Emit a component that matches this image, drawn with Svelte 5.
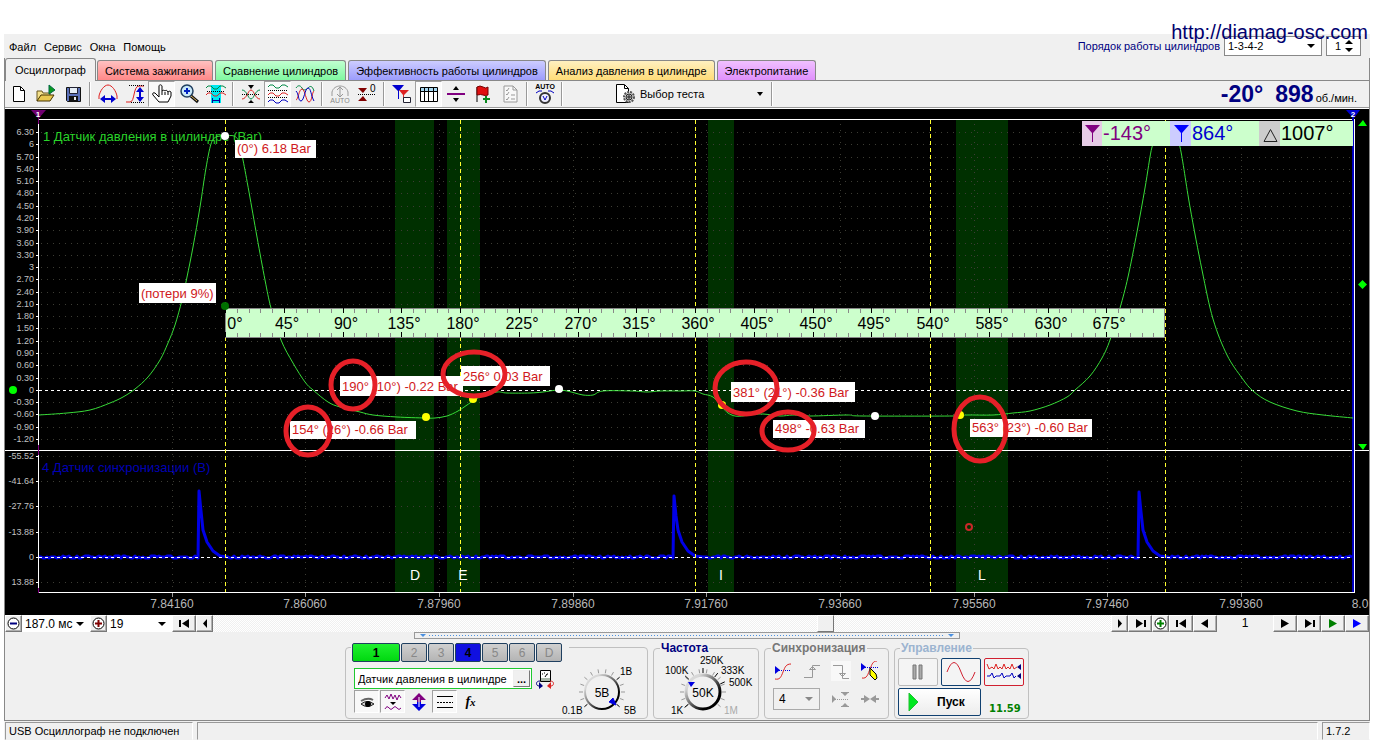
<script>
  const tabs = [
    { label: 'Осциллограф', tone: 'active' },
    { label: 'Система зажигания', tone: 'red' },
    { label: 'Сравнение цилиндров', tone: 'green' },
    { label: 'Эффективность работы цилиндров', tone: 'blue' },
    { label: 'Анализ давления в цилиндре', tone: 'yellow' },
    { label: 'Электропитание', tone: 'violet' }
  ];

  const toolGroups = [
    ['new', 'open', 'save'],
    ['spanX', 'spanY', 'hand', 'zoom', 'range'],
    ['merge', 'stack', 'overlay'],
    ['autoGray', 'zero'],
    ['cursors', 'grid', 'split', 'flag', 'list'],
    ['autoDial']
  ];
  let pressed = $state({ hand: true, stack: true, grid: true });

  const hump = (y, c) => `<path d="M1 ${y}l2-2h3l3 3h3l3-3h3l3 2" fill="none" stroke="${c}"/>`;
  const icons = {
    new: '<path d="M5.5 3.5h7l4 4v11h-11z" fill="#fff" stroke="#000"/><path d="M12.5 4v3.5h4" fill="none" stroke="#000"/>',
    open: '<path d="M2 18V8h5l1 2h7v3" fill="#f4e08a" stroke="#665520"/><path d="M2 18l4-6h13l-4 6z" fill="#e8c850" stroke="#443300"/><path d="M14 2l6 5-6 4z" fill="#0a9a20" stroke="#064"/>',
    save: '<path d="M4.5 4.5h14v14h-13l-1-1z" fill="#5a70b8" stroke="#111"/><path d="M7.5 4.5h8v6h-8z" fill="#e4ecf4" stroke="#223"/><path d="M7 13h9v5H7z" fill="#111"/><path d="M12 14h2v3h-2z" fill="#eee"/>',
    spanX: '<path d="M2 16V13C3 8 7 2 11 2s8 6 9 11v3" fill="none" stroke="#e02020"/><path d="M6 16h10" stroke="#0000d0" stroke-width="2"/><path d="M3 16l5-4v8zM19 16l-5-4v8z" fill="#0000d0"/>',
    spanY: '<path d="M2 19h4c5 0 3-16 9-16h5" fill="none" stroke="#e02020"/><path d="M5 2.5h15M7 19.5h13" stroke="#000" stroke-dasharray="1 1"/><path d="M16 7v9" stroke="#0000d0" stroke-width="2"/><path d="M16 4l-4 5h8zM16 19l-4-5h8z" fill="#0000d0"/>',
    hand: '<path d="M8 14L4 10c-2-1-3 1-2 2l6 7h9l3-6V9c-1-1-2-1-3 0-1-2-2-2-3-1-1-1-2-1-3 0V3c-1-2-3-1-3 0z" fill="#fff" stroke="#000"/><path d="M11 8v4M14 9v3M17 9v3" stroke="#000"/>',
    zoom: '<circle cx="9" cy="8" r="6" fill="#c8e8f8" stroke="#224060" stroke-width="1.5"/><path d="M13 13l7 6" stroke="#111" stroke-width="3"/><path d="M13 13l6 5" stroke="#e0b860"/><path d="M6 8h6M9 5v6" stroke="#0020c0" stroke-width="2"/>',
    range: '<path d="M6 2h10v18H6z" fill="#00e8f0"/>' + hump(5, '#084') + hump(12, '#d22') + '<path d="M2 8.5h18" stroke="#000" stroke-dasharray="1 1"/><path d="M7 17.5h8M7.5 15v5M14.5 15v5" stroke="#0000a0"/>',
    merge: '<path d="M2 7c5 0 6 9 9 9s4-9 9-9" fill="none" stroke="#084"/><path d="M2 16c5 0 6-9 9-9s4 9 9 9" fill="none" stroke="#d22"/><path d="M2 11.5h18" stroke="#000" stroke-dasharray="1 1"/><path d="M8 2h6l-3 4zM8 20h6l-3-3z" fill="#000"/>',
    stack: hump(4, '#084') + '<path d="M1 7.5h20M1 14.5h20" stroke="#000" stroke-dasharray="1 1"/>' + hump(12, '#d22') + hump(19, '#0000c0'),
    overlay: '<path d="M2 5c2-3 4-3 6 0s4 2 6 0 4-3 6 3" fill="none" stroke="#084"/><path d="M2 17C4 17 5 6 8 6s4 13 7 13 3-10 5-11" fill="none" stroke="#d22"/><path d="M2 8c3 3 2 10 5 10s4-13 7-13 3 8 6 13" fill="none" stroke="#0000c0"/>',
    autoGray: '<path d="M3 13V9C5 1 17 1 19 9v4" fill="none" stroke="#999"/><path d="M11 5v8M8 7l3-3 3 3M8 11l3 3 3-3" fill="none" stroke="#999"/><text x="11" y="20" font-size="7" text-anchor="middle" fill="#888">AUTO</text>',
    zero: '<path d="M2 5h9l-4 5zM2 18h9l-4-5z" fill="#800000"/><path d="M2 11.5h18" stroke="#000" stroke-dasharray="1 1"/><text x="14" y="9" font-size="10" fill="#000">0</text>',
    cursors: '<path d="M1 2h12L8 8v8H7V8z" fill="#0000d0"/><path d="M8 7h10l-5 5v7h-1v-7z" fill="#d22"/><path d="M12.5 14.5h7v5h-7z" fill="#fff" stroke="#223"/>',
    grid: '<path d="M2.5 4.5h17v14h-17z" fill="#fff" stroke="#000"/><path d="M3 5h16v3H3z" fill="#a8d8f0"/><path d="M2 8.5h18M6.5 5v13M10.5 5v13M15.5 5v13" stroke="#000"/>',
    split: '<path d="M2 11h18" stroke="#800080" stroke-width="2"/><path d="M8 7h6l-3-4zM8 15h6l-3 4z" fill="#000"/>',
    flag: '<path d="M5 4v15" stroke="#000"/><path d="M5 4q3-2 6 0t5 0v8q-3 1-5 0t-6 0z" fill="#e01010" stroke="#700"/><path d="M11 16h7M14 13v7" stroke="#0a8a20" stroke-width="2"/>',
    list: '<path d="M5 3h9l4 4v12H5z" fill="#f8f8f8" stroke="#999"/><path d="M14 3v4h4M7 7l1 1 2-3M7 11l1 1 2-3M7 16l1 1 2-3M12 12h4M12 16h4" fill="none" stroke="#999"/>',
    autoDial: '<text x="11" y="6" font-size="7" font-weight="bold" text-anchor="middle" fill="#000">AUTO</text><circle cx="11" cy="15" r="5" fill="#eef" stroke="#333" stroke-width="2"/><path d="M9 13l2 4 2-4M2 10q3-3 6-2M20 10q-3-3-6-2" fill="none" stroke="#0000c0"/>',
    test: '<path d="M2.5 1.5h8l4 4v14h-12z" fill="#fff" stroke="#000"/><path d="M10.5 2v3.5h4" fill="none" stroke="#000"/><circle cx="15" cy="14" r="5" fill="#ddd" stroke="#555" stroke-width="2" stroke-dasharray="2 1"/><circle cx="15" cy="14" r="3" fill="#bbb" stroke="#222"/><path d="M15 12v4M13 14h4" stroke="#222"/>'
  };

  const seconds = [
    { x: 172, t: '7.84160' }, { x: 305, t: '7.86060' }, { x: 439, t: '7.87960' },
    { x: 573, t: '7.89860' }, { x: 706, t: '7.91760' }, { x: 840, t: '7.93660' },
    { x: 974, t: '7.95560' }, { x: 1107, t: '7.97460' }, { x: 1241, t: '7.99360' },
    { x: 1360, t: '8.0' }
  ];
  const barTicks = Array.from({ length: 26 }, (_, i) => {
    const v = (63 - i * 3) / 10;
    return { y: Math.round(132 + i * 12.28), t: Number.isInteger(v) ? String(v) : v.toFixed(2) };
  });
  const voltTicks = ['-55.52', '-41.64', '-27.76', '-13.88', '0', '13.88'].map((t, i) => ({
    y: Math.round(456 + i * 25.2),
    t
  }));
  const bands = [
    { x: 395, w: 39, t: 'D', tx: 415 },
    { x: 447, w: 33, t: 'E', tx: 463 },
    { x: 708, w: 26, t: 'I', tx: 721 },
    { x: 956, w: 52, t: 'L', tx: 982 }
  ];
  const strokes = [225, 460, 695, 930, 1165];
  const rulerTicks = Array.from({ length: 80 }, (_, i) => ({ x: Math.round(225 + i * 11.75), major: i % 5 === 0 }));
  const rulerLabels = Array.from({ length: 16 }, (_, i) => ({
    x: i ? Math.round(228 + i * 58.75) : 235,
    t: i * 45 + '°'
  }));

  const pressure = [
    [39, 415], [67, 413], [90, 410], [110, 403], [123, 397], [135, 389], [148, 377], [160, 360],
    [168, 343], [175, 325], [182, 300], [187, 277], [193, 247], [200, 207], [206, 168], [211, 144],
    [216, 137], [225, 136], [234, 136], [239, 142], [243, 160], [249, 192], [257, 237], [265, 280],
    [271, 308], [281, 340], [293, 363], [305, 382], [313, 390], [328, 402], [340, 407], [360, 412],
    [373, 415], [397, 417], [425, 418], [435, 418], [447, 416], [458, 411], [467, 405], [473, 401],
    [482, 396], [497, 392], [507, 393], [530, 393], [543, 392], [558, 390], [567, 391], [575, 393],
    [583, 395], [593, 395], [603, 391], [632, 391], [647, 392], [660, 391], [680, 391], [695, 391],
    [703, 394], [713, 397], [722, 407], [728, 413], [735, 416], [743, 416], [748, 415], [763, 414],
    [780, 416], [793, 415], [810, 416], [847, 415], [863, 416], [953, 416], [967, 415], [993, 415],
    [1013, 413], [1030, 411], [1050, 405], [1067, 397], [1075, 390], [1090, 376], [1102, 358],
    [1110, 340], [1120, 308], [1128, 277], [1137, 232], [1145, 188], [1152, 147], [1158, 138],
    [1165, 136], [1174, 138], [1180, 147], [1190, 207], [1202, 270], [1213, 319], [1227, 355],
    [1242, 378], [1253, 391], [1270, 402], [1297, 411], [1323, 415], [1353, 418]
  ];

  // Catmull-Rom through the samples
  function smooth(pts) {
    let d = `M${pts[0]}`;
    for (let i = 0; i < pts.length - 1; i++) {
      const a = pts[i - 1] ?? pts[i];
      const b = pts[i];
      const c = pts[i + 1];
      const e = pts[i + 2] ?? c;
      d += `C${b[0] + (c[0] - a[0]) / 6} ${b[1] + (c[1] - a[1]) / 6} ${c[0] - (e[0] - b[0]) / 6} ${c[1] - (e[1] - b[1]) / 6} ${c}`;
    }
    return d;
  }

  function syncPath() {
    let d = 'M39 557';
    let x = 41;
    for (const [px, top] of [[198, 491], [673, 496], [1138, 492]]) {
      for (; x < px - 1; x += 2) d += `L${x} ${557 + Math.round(Math.sin(x * x) * 0.9)}`;
      d += `L${px} 558L${px + 1} ${top}L${px + 3} ${top + 20}L${px + 5} 530L${px + 9} 542L${px + 15} 551L${px + 22} 556L${px + 30} 557`;
      x = px + 32;
    }
    for (; x < 1353; x += 2) d += `L${x} ${557 + Math.round(Math.sin(x * x) * 0.9)}`;
    return d;
  }

  const dots = [
    [225, 136, '#fff'], [559, 389, '#fff'], [875, 416, '#fff'], [426, 417, '#ff0'],
    [473, 399, '#ff0'], [722, 405, '#ff0'], [960, 415, '#ff0'], [225, 306, '#007000'], [13, 390, '#0f0']
  ];
  const notes = [
    { x: 235, y: 140, w: 81, h: 18, t: '(0°) 6.18 Bar' },
    { x: 139, y: 283, w: 77, h: 20, t: '(потери 9%)' },
    { x: 340, y: 376, w: 123, h: 20, t: '190° (10°) -0.22 Bar' },
    { x: 290, y: 421, w: 126, h: 18, t: '154° (26°) -0.66 Bar' },
    { x: 461, y: 366, w: 89, h: 20, t: '256° 0.03 Bar' },
    { x: 731, y: 382, w: 124, h: 20, t: '381° (21°) -0.36 Bar' },
    { x: 773, y: 420, w: 92, h: 18, t: '498° -0.63 Bar' },
    { x: 970, y: 419, w: 122, h: 18, t: '563° (23°) -0.60 Bar' }
  ];
  const circles = [
    [353, 385, 22, 24], [308, 431, 22, 24], [474, 374, 31, 22],
    [746, 388, 31, 26], [788, 431, 26, 19], [980, 429, 26, 32]
  ];

  let channel = $state('1');
  let channelName = $state('Датчик давления в цилиндре');
  let scroll = $state(686);

  function ray(cx, cy, deg, r1, r2) {
    const a = (deg * Math.PI) / 180;
    return `M${cx + Math.sin(a) * r1} ${cy - Math.cos(a) * r1}L${cx + Math.sin(a) * r2} ${cy - Math.cos(a) * r2}`;
  }
  const dialSteps = Array.from({ length: 14 }, (_, i) => -130 + i * 20);
</script>

{#snippet nav(label, d, w, color = '#000')}
  <button class="nav" class:narrow={w === 17} aria-label={label}>
    <svg width="12" height="11" viewBox="0 0 12 11"><path {d} fill={color} /></svg>
  </button>
{/snippet}

{#snippet round(label, color, plus)}
  <button class="nav narrow" aria-label={label}>
    <svg width="13" height="13" viewBox="0 0 13 13">
      <circle cx="6.5" cy="6.5" r="5.5" fill="#fff" stroke="#000" />
      <path d={plus ? 'M3 6.5h7M6.5 3v7' : 'M3 6.5h7'} stroke={color} stroke-width="2" />
    </svg>
  </button>
{/snippet}

<div class="window">
  <div class="menubar">
    <nav>
      <a href="#file">Файл</a>
      <a href="#service">Сервис</a>
      <a href="#windows">Окна</a>
      <a href="#help">Помощь</a>
    </nav>
    <div class="order">
      <label for="order">Порядок работы цилиндров</label>
      <span class="drop framed">
        <select id="order"><option>1-3-4-2</option></select>
      </span>
      <span class="spin">
        <input aria-label="Цилиндр" value="1" />
        <span class="arrows">
          <button class="up" aria-label="Больше"></button>
          <button class="down" aria-label="Меньше"></button>
        </span>
      </span>
    </div>
    <a class="site" href="http://diamag-osc.com">http://diamag-osc.com</a>
  </div>

  <div class="workspace">
    <div class="tabs" role="tablist">
      {#each tabs as tab}
        <button role="tab" aria-selected={tab.tone === 'active'} class="tab {tab.tone}">{tab.label}</button>
      {/each}
    </div>

    <div class="toolbar">
      {#each toolGroups as group}
        {#each group as name}
          <button class="tool" class:pressed={pressed[name]} aria-label={name} onclick={() => (pressed[name] = !pressed[name])}>
            <svg width="22" height="22" viewBox="0 0 22 22">{@html icons[name]}</svg>
          </button>
        {/each}
        <span class="sep"></span>
      {/each}
      <button class="test">
        <svg width="22" height="22" viewBox="0 0 22 22">{@html icons.test}</svg>
        <span>Выбор теста</span>
        <i class="caret"></i>
      </button>
      <span class="sep"></span>
      <div class="speed">
        <b>-20°</b>
        <b>898</b>
        <span>об./мин.</span>
      </div>
    </div>

    <svg class="chart" viewBox="5 109 1364 506" role="img" aria-label="Осциллограмма">
      <rect x="5" y="109" width="1364" height="506" fill="#000" />
      {#each bands as b}
        <rect x={b.x} y="120" width={b.w} height="472" fill="#003000" />
      {/each}

      <g class="crisp gridlines">
        {#each [...barTicks, ...voltTicks] as t}
          <path d="M41 {t.y}.5H1353" />
        {/each}
        {#each seconds as s}
          {#if s.x < 1353}<path d="M{s.x}.5 124V592" />{/if}
        {/each}
      </g>
      <g class="crisp" stroke="#fff" fill="none">
        <path d="M39 119.5H1354M38.5 119V593M38 592.5H1355M1354.5 119V593M5 450.5H1369" />
        {#each [...barTicks, ...voltTicks] as t}
          <path d="M36 {t.y}.5h3" />
        {/each}
        {#each seconds as s}
          {#if s.x < 1353}<path d="M{s.x}.5 593v4" stroke="#999" />{/if}
        {/each}
      </g>
      <path class="crisp" d="M38.5 112v12M38.5 445v10M38.5 588v5" stroke="#800080" />
      <path class="crisp" d="M1353 112V592" stroke="#0000c0" stroke-width="2" />

      {#each [...barTicks, ...voltTicks] as t}
        <text class="axis" x="34" y={t.y + 3}>{t.t}</text>
      {/each}
      {#each seconds as s}
        <text class="time" x={s.x} y="608">{s.t}</text>
      {/each}

      <text class="channel" x="43" y="141" fill="#2ad42a">1 Датчик давления в цилиндре (Bar)</text>
      <text class="channel" x="42" y="472" fill="#0000b4">4 Датчик синхронизации (В)</text>

      <path d={syncPath()} fill="none" stroke="#0000e6" stroke-width="3" stroke-linejoin="round" />
      <path class="crisp" d="M39 557.5H1353M39 390.5H1353" stroke="#fff" stroke-dasharray="3 3" />
      <path d={smooth(pressure)} fill="none" stroke="#38dc38" />
      <g class="crisp" stroke="#ffff30" stroke-dasharray="4 3">
        {#each strokes as x}
          <path d="M{x}.5 120V592" />
        {/each}
      </g>
      {#each bands as b}
        <text class="phase" x={b.tx} y="580">{b.t}</text>
      {/each}

      <g class="crisp">
        <rect x="225.5" y="308.5" width="939" height="29" fill="#ccffcc" stroke="#888" />
        {#each rulerTicks as t}
          <path d="M{t.x}.5 {t.major ? '308v5m0 19v5' : '309v4m0 20v4'}" stroke={t.major ? '#000' : '#888'} />
        {/each}
      </g>
      {#each rulerLabels as l}
        <text class="degree" x={l.x} y="329">{l.t}</text>
      {/each}

      {#each dots as [x, y, c]}
        <circle cx={x} cy={y} r="4" fill={c} />
      {/each}
      {#each notes as n}
        <rect x={n.x} y={n.y} width={n.w} height={n.h} fill="#fff" />
        <text class="note" x={n.x + 2} y={n.y + n.h - 5}>{n.t}</text>
      {/each}
      {#each circles as [cx, cy, rx, ry]}
        <ellipse {cx} {cy} {rx} {ry} fill="none" stroke="#e62028" stroke-width="5" />
      {/each}
      <circle cx="969" cy="527" r="3" fill="none" stroke="#c82828" stroke-width="2" />

      <rect x="1082" y="121" width="271" height="25" fill="#ccffcc" />
      <rect x="1082" y="121" width="20" height="25" fill="#e6cce6" />
      <rect x="1170" y="121" width="21" height="25" fill="#ccccff" />
      <rect x="1259" y="121" width="21" height="25" fill="#cccccc" />
      <path d="M1085 125h15l-7 8v9h-1v-9z" fill="#800080" />
      <path d="M1174 125h15l-7 8v9h-1v-9z" fill="#0000ff" />
      <path d="M1264 141.5l6.5-12 6.5 12z" fill="none" stroke="#222" />
      <text class="reading" x="1103" y="140" fill="#800080">-143°</text>
      <text class="reading" x="1192" y="140" fill="#0000d0">864°</text>
      <text class="reading" x="1281" y="140" fill="#000">1007°</text>

      <path d="M31 110h15l-7 8h-1z" fill="#700070" />
      <path d="M1346 110h14l-6 8h-1z" fill="#0000d0" />
      <text class="flagno" x="38" y="117">1</text>
      <text class="flagno" x="1353" y="117">2</text>
      <path d="M1358 126l5-6 4 6zM1358 444h9l-4 6zM1358 284.5l4.5-4.5 4.5 4.5-4.5 4.5z" fill="#00ff00" />
    </svg>

    <div class="navbar">
      {@render round('Уменьшить', '#000080', false)}
      <span class="drop span"><select aria-label="Длительность"><option>187.0 мс</option></select></span>
      {@render round('Увеличить', '#800000', true)}
      <span class="drop zoomlist"><select aria-label="Масштаб"><option>19</option></select></span>
      {@render nav('В начало', 'M1 2h2v7H1zM11 1v9L4 5.5z', 24)}
      {@render nav('Назад', 'M8 1v9L4 5.5z', 17)}
      <input class="track" type="range" min="0" max="1000" bind:value={scroll} aria-label="Прокрутка" />
      {@render nav('Вперёд', 'M4 1v9L8 5.5z', 17)}
      {@render nav('В конец', 'M10 2h2v7h-2zM2 1v9L9 5.5z', 24)}
      {@render round('Добавить', '#008000', true)}
      {@render nav('Первый кадр', 'M1 2h2v7H1zM11 1v9L4 5.5z', 24)}
      {@render nav('Предыдущий кадр', 'M9 1v9L2 5.5z', 24)}
      <output>1</output>
      {@render nav('Следующий кадр', 'M2 1v9L10 5.5z', 24)}
      {@render nav('Последний кадр', 'M10 2h2v7h-2zM2 1v9L9 5.5z', 24)}
      {@render nav('Воспроизвести', 'M2 1v9L10 5.5z', 24, '#008000')}
      {@render nav('Воспроизвести всё', 'M2 1v9L10 5.5z', 24, '#0000ff')}
    </div>

    <div class="splitter"><i class="grip"></i><span></span><i class="grip"></i></div>

    <div class="panel">
      <fieldset class="channels">
        <legend>
          {#each ['1', '2', '3', '4', '5', '6', 'D'] as c}
            <button class="ch" class:first={c === '1'} class:fourth={c === '4'} onclick={() => (channel = c)}>{c}</button>
          {/each}
        </legend>
        <div class="chbody">
          <div class="chset">
            <div class="namerow">
              <span class="namebox">
                <input aria-label="Название датчика" bind:value={channelName} />
                <button aria-label="Выбрать датчик">...</button>
              </span>
              <button class="bare" aria-label="Подключение">
                <svg width="20" height="20" viewBox="0 0 20 20">
                  <path d="M5.5 1.5h10v11h-10z" fill="#fff" stroke="#000" /><path d="M6 9h9v3H6z" fill="#aab8aa" />
                  <path d="M7 5h1M9 4h1M12 5h1M10 8l2-3" stroke="#000" />
                  <path d="M5 12c-5 0-4 5-1 5" fill="none" stroke="#000080" /><path d="M4 13l4 4-4 3z" fill="#000080" />
                  <path d="M15 12c5 0 4 5 1 5" fill="none" stroke="#d22" /><path d="M16 13l-4 4 4 3z" fill="#d22" />
                </svg>
              </button>
            </div>
            <div class="viewrow">
              <button class="view on" aria-label="Показать">
                <svg width="20" height="20" viewBox="0 0 20 20">
                  <path d="M4 12q6-5 13 0-7 5-13 0z" fill="#ccc" stroke="#222" /><circle cx="11" cy="12" r="3" fill="#000" />
                  <path d="M4 9q7-4 12-1" fill="none" stroke="#666" stroke-width="2" />
                </svg>
              </button>
              <button class="view on" aria-label="Фильтр">
                <svg width="20" height="20" viewBox="0 0 20 20">
                  <path d="M2 6l2-3 2 4 2-5 2 5 2-4 2 5 2-5 2 3M2 17q2-4 4-1t4 0 4 0 4 0" fill="none" stroke="#800080" /><path d="M7 10h6l-3 3z" />
                </svg>
              </button>
              <button class="view" aria-label="Сдвиг">
                <svg width="20" height="20" viewBox="0 0 20 20">
                  <path d="M10 1l7 7h-5v2H8V8H3z" fill="#800080" /><path d="M10 19l7-7h-5v-2H8v2H3z" fill="#0000e0" /><path d="M10 5v10" stroke="#fff" />
                </svg>
              </button>
              <button class="view on" aria-label="Линии">
                <svg width="20" height="20" viewBox="0 0 20 20"><path d="M2 4.5h16M2 15.5h16" stroke="#000" /><path d="M2 10.5h16" stroke="#000" stroke-dasharray="2 1" /></svg>
              </button>
              <button class="view fx" aria-label="Функция">f<small>x</small></button>
            </div>
          </div>
          <svg class="dial" width="84" height="56" viewBox="558 662 84 56">
            <defs>
              <linearGradient id="rim" x1="0" y1="0" x2="1" y2="1">
                <stop offset="0.2" stop-color="#d8d8d8" /><stop offset="0.75" stop-color="#000" />
              </linearGradient>
            </defs>
            {#each dialSteps as a}
              <path d={ray(600, 692, a, 19, 23)} stroke={[-130, 50, 130].includes(a) ? '#000' : '#999'} />
            {/each}
            <circle cx="600" cy="692" r="17" fill="#f0f0f0" stroke="url(#rim)" stroke-width="2" />
            <path d="M611 698l3 7-7-3z" fill="#0000e0" stroke="#0000e0" />
            <text class="value" x="600" y="697">5В</text>
            <text x="618" y="675">1В</text>
            <text x="622" y="714">5В</text>
            <text x="560" y="714">0.1В</text>
          </svg>
        </div>
      </fieldset>

      <fieldset class="freq">
        <legend>Частота</legend>
        <svg class="dial" width="97" height="62" viewBox="658 655 97 62">
          {#each dialSteps as a}
            <path d={ray(704, 692, a, 19, 23)} stroke="#999" />
          {/each}
          {#each [-130, -48, 0, 38, 65] as a}
            <path d={ray(704, 692, a, 19, 24)} stroke="#000" />
          {/each}
          <circle cx="704" cy="692" r="17" fill="#f0f0f0" stroke="url(#rim)" stroke-width="3" />
          <path d="M689 682h7l-4 5z" fill="#0000e0" />
          <text class="value" x="704" y="697">50K</text>
          <text x="701" y="664">250K</text>
          <text x="666" y="674">100K</text>
          <text x="722" y="674">333K</text>
          <text x="730" y="686">500K</text>
          <text x="672" y="714">1K</text>
          <text x="725" y="714" fill="#aaa">1M</text>
        </svg>
      </fieldset>

      <fieldset class="sync">
        <legend>Синхронизация</legend>
        <div class="syncrow">
          <button class="bare" aria-label="Уровень">
            <svg width="20" height="20" viewBox="0 0 20 20"><path d="M2 5v8l5-4z" fill="#0000e0" /><path d="M6 9.5h12" stroke="#0000e0" stroke-dasharray="1 1" /><path d="M2 18c5 1 6-2 8-7s3-8 8-8" fill="none" stroke="#d22" /></svg>
          </button>
          <button class="bare" aria-label="Фронт"><svg width="20" height="20" viewBox="0 0 20 20"><path d="M2 16.5h8.5v-12H18M7.5 8.5h6l-3-3z" fill="none" stroke="#999" /></svg></button>
          <button class="bare lit" aria-label="Спад"><svg width="20" height="20" viewBox="0 0 20 20"><path d="M2 4.5h9.5v13H18M8.5 12.5h6l-3 3z" fill="none" stroke="#999" /></svg></button>
          <button class="bare" aria-label="Автоматически">
            <svg width="20" height="20" viewBox="0 0 20 20"><path d="M1 2v8l5-4z" fill="#0000e0" /><path d="M5 6.5h14" stroke="#0000e0" stroke-dasharray="1 1" /><path d="M2 17c5 1 6-4 8-9s3-8 7-8" fill="none" stroke="#d22" /><path d="M10 7l3 3 3 3 1 4-2 2-3-3-2-2z" fill="#ff0" stroke="#000" /></svg>
          </button>
        </div>
        <div class="syncrow">
          <span class="drop framed off"><select aria-label="Канал синхронизации" disabled><option>4</option></select></span>
          <button class="bare" aria-label="Порог" disabled><svg width="20" height="20" viewBox="0 0 20 20"><path d="M2 6v8l4-4zM12 4h6l-3 3zM12 17h6l-3-3z" fill="#999" /><path d="M5 10.5h13" stroke="#999" stroke-dasharray="1 1" /><path d="M11 3.5h8M11 17.5h8" stroke="#999" /></svg></button>
          <button class="bare" aria-label="Сжать" disabled><svg width="20" height="20" viewBox="0 0 20 20"><path d="M1 10h4M19 10h-4" stroke="#999" stroke-width="2" /><path d="M4 6v8l6-4zM16 6v8l-6-4z" fill="#999" /></svg></button>
        </div>
      </fieldset>

      <fieldset class="control">
        <legend>Управление</legend>
        <div class="ctlrow">
          <button class="big disabled" aria-label="Пауза"><svg width="14" height="18" viewBox="0 0 14 18"><path d="M2 2h3v14H2zM8 2h3v14H8z" fill="#aaa" stroke="#777" /></svg></button>
          <button class="big" aria-label="Одиночный"><svg width="32" height="22" viewBox="0 0 32 22"><path d="M2 11q7-19 14 0t14 0" fill="none" stroke="#d02030" /></svg></button>
          <button class="big hot" aria-label="Непрерывный">
            <svg width="36" height="22" viewBox="0 0 36 22"><path d="M1 3l2 5 3-2 2 2 2-5 2 5 2-2 2 2 2-5 2 5 2-2 2 2 2-5 2 5 3-2" fill="none" stroke="#d22" /><path d="M1 15h3l2-3 2 5 2-2h4l2-3 2 5 2-2h4l2-3 2 5 2-2" fill="none" stroke="#0000c0" /><path d="M35 3v6l-4-3zM35 12v6l-4-3z" fill="#000080" /></svg>
          </button>
        </div>
        <div class="ctlrow">
          <button class="start"><svg width="12" height="20" viewBox="0 0 12 20"><path d="M1 1l9 9-9 9z" fill="#00e820" stroke="#20c030" /></svg><span>Пуск</span></button>
          <span class="clock">11.59</span>
        </div>
      </fieldset>
    </div>
  </div>

  <footer>
    <span class="state">USB Осциллограф не подключен</span>
    <span class="empty"></span>
    <span class="version">1.7.2</span>
  </footer>
</div>

<style>
:global(body) { margin: 0; background: #fff; }
.window { margin: 34px 12px 0 4px; background: #f0f0f0; color: #000; font: 11px/14px "Liberation Sans", Arial, sans-serif; }
button, input, select { font: inherit; color: inherit; margin: 0; padding: 0; box-sizing: border-box; }
button { border: 0; background: none; }
svg { display: block; flex: none; }
.crisp { shape-rendering: crispEdges; }

.menubar { position: relative; display: flex; justify-content: space-between; align-items: center; height: 24px; padding: 0 9px 0 5px; }
.menubar nav { display: flex; gap: 8px; margin-top: 2px; }
.menubar nav a { color: #000; text-decoration: none; }
.order { display: flex; align-items: center; gap: 4px; color: #000080; }
.site { position: absolute; top: -13px; right: 2px; color: #00006e; font-size: 20px; line-height: 22px; text-decoration: none; }
.drop { position: relative; display: block; }
.drop select { appearance: none; width: 100%; height: 100%; border: 0; border-radius: 0; background: #fff; padding: 0 3px; color: #000; opacity: 1; }
.drop::after { content: ""; position: absolute; right: 6px; top: 50%; margin-top: -2px; border: 4px solid transparent; border-top-color: #000; border-bottom: 0; pointer-events: none; }
.framed { border: 1px solid #888; }
.order .drop { width: 96px; height: 18px; }
.spin { display: flex; width: 33px; height: 18px; border: 1px solid #888; background: #fff; color: #000; }
.spin input { width: 18px; border: 0; text-align: right; background: #fff; padding-right: 4px; }
.arrows { display: flex; flex-direction: column; justify-content: center; gap: 4px; }
.arrows button { border: 4px solid transparent; width: 8px; height: 4px; }
.arrows .up { border-top: 0; border-bottom-color: #000; }
.arrows .down { border-bottom: 0; border-top-color: #000; }

.workspace { border: 1px solid #888; border-top: 0; }
.tabs { display: flex; align-items: flex-end; height: 22px; gap: 2px; }
.tab { height: 20px; padding: 0 7px; border: 1px solid #888; border-bottom: 0; border-radius: 3px 3px 0 0; white-space: nowrap; }
.tab.active { height: 23px; margin: 0 -1px -1px 0; padding: 0 9px; background: #f0f0f0; position: relative; }
.red { background: linear-gradient(#ffc0c0, #ff8888); }
.green { background: linear-gradient(#c0ffd0, #80f8a0); }
.blue { background: linear-gradient(#ccccff, #9c9cfc); }
.yellow { background: linear-gradient(#fff0c0, #ffdc78); }
.violet { background: linear-gradient(#f0c0ff, #e090fc); }

.toolbar { display: flex; align-items: center; height: 26px; border-top: 1px solid #888; border-bottom: 1px solid #999; margin-bottom: 1px; box-shadow: 0 1px #fff; }
.tool { width: 27px; height: 26px; display: grid; place-items: center; border: 1px solid transparent; }
.pressed { background: #fafafa; border-color: #a0a0a0 #fff #fff #a0a0a0; }
.sep { width: 8px; height: 24px; background: linear-gradient(90deg, transparent 3px, #999 3px, #999 4px, #fff 4px, #fff 5px, transparent 5px); }
.test { display: flex; align-items: center; width: 154px; height: 24px; margin-left: 48px; padding-right: 5px; }
.test span { margin-left: 4px; }
.caret { margin-left: auto; border: 3px solid transparent; border-top: 4px solid #000; border-bottom: 0; }
.speed { display: flex; align-items: baseline; margin-left: auto; padding-right: 12px; }
.speed b { color: #000080; font-size: 23px; line-height: 24px; margin-right: 12px; }
.speed b + b { margin-right: 2px; }

.chart { width: 100%; height: auto; font-family: "Liberation Sans", Arial, sans-serif; }
.gridlines { stroke: #3c3c34; stroke-dasharray: 1 5; }
.axis { font-size: 9px; fill: #c0c0c0; text-anchor: end; }
.time { font-size: 12px; fill: #b8b8b8; text-anchor: middle; }
.channel { font-size: 13px; }
.phase { font-size: 14px; fill: #fff; text-anchor: middle; }
.degree { font-size: 16px; fill: #000; text-anchor: middle; }
.note { font-size: 13px; fill: #d01820; }
.reading { font-size: 20px; }
.flagno { font-size: 8px; font-weight: bold; fill: #fff; text-anchor: middle; }

.navbar { display: flex; height: 17px; }
.nav { width: 24px; display: grid; place-items: center; background: #f0f0f0; border: 1px solid; border-color: #fff #777 #777 #fff; box-shadow: inset -1px -1px #b0b0b0; }
.narrow { width: 17px; }
.span { width: 68px; font-size: 12px; }
.zoomlist { width: 65px; font-size: 12px; }
.track { appearance: none; flex: 1; min-width: 0; height: 17px; background: repeating-conic-gradient(#f0f0f0 0 25%, #fff 0 50%) 0 0 / 2px 2px; }
.track::-webkit-slider-thumb { appearance: none; width: 17px; height: 17px; background: #f0f0f0; border: 1px solid; border-color: #fff #777 #777 #fff; }
.navbar output { width: 56px; text-align: center; font-size: 12px; line-height: 17px; }

.splitter { display: flex; align-items: center; gap: 3px; box-sizing: border-box; width: 546px; height: 7px; margin: 0 auto; padding: 0 5px; border: 1px solid #999; }
.splitter span { flex: 1; height: 1px; background: repeating-linear-gradient(90deg, #4a90e0 0 1px, transparent 1px 3px); }
.grip { border: 3px solid transparent; border-top-color: #4a90e0; border-bottom: 0; }

.panel { display: flex; justify-content: center; gap: 5px; height: 79px; margin-top: 2px; }
fieldset { box-sizing: border-box; min-width: 0; height: 78px; margin: 0; padding: 0 3px; border: 1px solid #c0c0c0; border-radius: 4px; }
legend { padding: 0 1px; margin-left: 3px; font-size: 12px; line-height: 14px; font-weight: bold; }
.channels { width: 303px; height: 76px; margin-top: 2px; }
.channels legend { display: flex; gap: 1px; height: 9px; margin-left: 2px; padding-right: 7px; font-weight: normal; }
.ch { width: 26px; height: 19px; border: 1px solid #204060; border-radius: 2px; background: linear-gradient(#d0d0d0, #b4b4b4); color: #888; }
.ch.first { width: 48px; background: linear-gradient(#20f030, #00d810); color: #000; font-weight: bold; }
.ch.fourth { background: #1010e0; color: #000; font-weight: bold; }
.chbody { display: flex; justify-content: space-between; margin-top: 9px; }
.chset { margin: 7px 0 0 5px; }
.namerow { display: flex; gap: 3px; }
.namebox { display: flex; align-items: center; box-sizing: border-box; width: 178px; height: 21px; border: 1px solid #20c830; background: #fff; }
.namebox input { width: 158px; height: 18px; border: 0; padding-left: 3px; background: #fff; }
.namebox button { width: 17px; height: 17px; background: #f0f0f0; border: 1px solid; border-color: #eee #777 #777 #eee; line-height: 8px; font-weight: bold; }
.viewrow { display: flex; gap: 1px; margin-top: 1px; }
.view { width: 25px; height: 23px; display: grid; place-items: center; border: 1px solid transparent; }
.view.on { background: #f8f8f8; border-color: #a0a0a0 #fff #fff #a0a0a0; }
.view.fx { display: block; font: italic bold 14px "Liberation Serif", serif; }
.fx small { font-size: 11px; }
.chbody .dial { margin-top: 1px; }
.dial text { font-size: 10px; }
.dial .value { font-size: 12px; text-anchor: middle; }

.freq { width: 106px; }
.freq legend { color: #000080; }
.sync { width: 125px; }
.sync legend { color: #777; }
.syncrow { display: flex; justify-content: space-between; align-items: center; height: 24px; padding: 0 5px; margin-top: 4px; }
.sync .drop { width: 45px; height: 20px; border-color: #aaa; font-size: 12px; }
.sync .drop select { background: #f0f0f0; padding-left: 5px; }
.sync .drop::after { border-top-color: #888; }
.bare { display: grid; place-items: center; }
.lit { background: #f8f8f8; }
.control { width: 135px; padding: 0; }
.control legend { color: #9cb4d0; margin-left: 5px; }
.ctlrow { display: flex; gap: 3px; padding: 0 3px; margin: 3px 0 2px; }
.ctlrow + .ctlrow { margin-top: 2px; }
.big { width: 40px; height: 28px; display: grid; place-items: center; border: 1px solid #104070; border-radius: 2px; background: #f4f4f4; }
.big.disabled { border-color: #bbb; }
.big.hot { border-color: #d02030; }
.start { display: flex; align-items: center; width: 83px; height: 28px; padding-left: 9px; border: 1px solid #104070; border-radius: 2px; background: linear-gradient(#fff, #ececec); font-size: 12px; font-weight: bold; }
.start span { margin-left: 17px; }
.clock { align-self: flex-end; margin-left: 5px; color: #008000; font: bold 10px/14px "DejaVu Sans", Verdana, sans-serif; }

footer { display: flex; gap: 4px; margin-top: 1px; padding-left: 1px; }
footer span { box-sizing: border-box; height: 18px; padding: 1px 3px; border: 1px solid; border-color: #999 #fff transparent #999; white-space: nowrap; }
.state { width: 188px; }
.empty { flex: 1; }
.version { width: 48px; }
</style>
